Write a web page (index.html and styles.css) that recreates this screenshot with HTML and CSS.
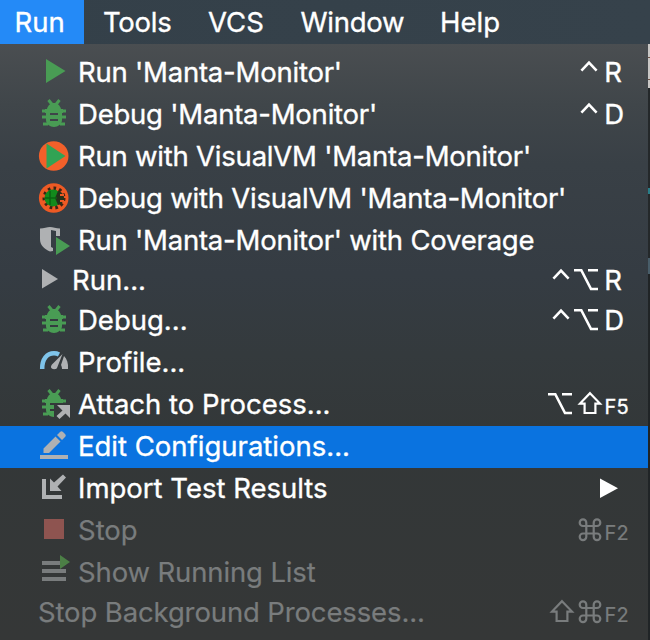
FILE: index.html
```html
<!DOCTYPE html>
<html lang="en">
<head>
<meta charset="utf-8">
<title>Run menu</title>
<link rel="stylesheet" href="styles.css">
</head>
<body>
<svg class="defs" aria-hidden="true">
  <symbol id="ctrl" viewBox="0 0 28 32"><path class="key" d="M5.4 13.6 13 5.6l7.600 8"/></symbol>
  <symbol id="opt" viewBox="0 0 28 32"><path class="key" d="M0 5.200h7.300L17 24H24M14 5.200H24"/></symbol>
  <symbol id="shift" viewBox="0 0 28 32"><path class="key thin" d="M14 4.200 24 14.600H19.400V24H8.600V14.600H4z"/></symbol>
  <symbol id="cmd" viewBox="0 0 28 32"><path class="key thin" d="M10.300 7.700v14.100a3.300 3.300 0 1 1-3.300-3.300h14a3.300 3.300 0 1 1-3.300 3.300v-14.100a3.300 3.300 0 1 1 3.300 3.300H7a3.300 3.300 0 1 1 3.300-3.300z"/></symbol>
  <symbol id="bug" viewBox="0 0 32 32">
    <path class="leg" d="m10.500 1 4 5M21.500 1l-4 5M4 12h5M23 12h5M4 18h5M23 18h5M5 25h5M22 25h5"/>
    <path fill="#499c54" fill-rule="evenodd" d="M9 10c1-4 4-6 7-6s6 2 7 6h2v4h-1v7c0 4-4 7-8 7s-8-3-8-7v-7H7v-4zM12 14v2h8v-2zM12 20v2h8v-2z"/>
  </symbol>
</svg>
<nav class="menubar">
  <span class="tab active">Run</span>
  <span class="tab tools">Tools</span>
  <span class="tab vcs">VCS</span>
  <span class="tab window">Window</span>
  <span class="tab help">Help</span>
</nav>
<div class="stage">
<main class="menu">
  <div class="row">
    <svg class="icon" viewBox="0 0 32 32"><path fill="#499c54" d="M8 2l19.500 12L8 26z"/></svg>
    <span class="label tight">Run 'Manta-Monitor'</span>
    <span class="keys"><svg class="mod"><use href="#ctrl"/></svg><span class="letter">R</span></span>
  </div>
  <div class="row">
    <svg class="icon"><use href="#bug"/></svg>
    <span class="label tight">Debug 'Manta-Monitor'</span>
    <span class="keys"><svg class="mod"><use href="#ctrl"/></svg><span class="letter">D</span></span>
  </div>
  <div class="row">
    <svg class="icon" viewBox="0 0 32 32"><circle cx="15.700" cy="15" r="14.800" fill="#f2602a"/><path fill="#31a354" d="M8.500 2.500l19 12.500-19 12.500z"/></svg>
    <span class="label tight">Run with VisualVM 'Manta-Monitor'</span>
  </div>
  <div class="row">
    <svg class="icon" viewBox="0 0 32 32">
      <circle cx="15.700" cy="15" r="14.800" fill="#ee5a24"/>
      <circle cx="16" cy="15" r="9.500" fill="none" stroke="#3b2415" stroke-width="4" stroke-dasharray="2.500 3"/>
      <circle cx="15" cy="15" r="8.500" fill="#128a1c"/>
      <path fill="#24321a" d="M20 8c4 1 6 4 6 7s-2 6-6 7l-3-7z"/>
      <path stroke="#0b6312" stroke-width="1.500" d="M7 15h12M12 8v14"/>
      <path stroke="#ee5a24" stroke-width="2" d="M22 12h4M22 18h4"/>
    </svg>
    <span class="label tight">Debug with VisualVM 'Manta-Monitor'</span>
  </div>
  <div class="row">
    <svg class="icon" viewBox="0 0 32 32"><path fill="#afb1b3" fill-rule="evenodd" d="M2 3.500c4 0 7-1.500 10-1.500s6 1.500 10 1.500V11h-4V6l-5-1v17l2 1v3l-3 .5C6 24 2 20 2 14z"/><path fill="#499c54" d="M18 12l14 9-14 9z"/></svg>
    <span class="label tight">Run 'Manta-Monitor' with Coverage</span>
  </div>
  <div class="row short">
    <svg class="icon narrow" viewBox="0 0 26 32"><path fill="#afb1b3" d="M4 4l16 10L4 23.500z"/></svg>
    <span class="label">Run...</span>
    <span class="keys"><svg class="mod"><use href="#ctrl"/></svg><svg class="mod tuck"><use href="#opt"/></svg><span class="letter">R</span></span>
  </div>
  <div class="row">
    <svg class="icon"><use href="#bug"/></svg>
    <span class="label">Debug...</span>
    <span class="keys"><svg class="mod"><use href="#ctrl"/></svg><svg class="mod tuck"><use href="#opt"/></svg><span class="letter">D</span></span>
  </div>
  <div class="row">
    <svg class="icon" viewBox="0 0 32 32"><path fill="none" stroke="#7fc4ea" stroke-width="4.500" d="M4.200 22C4 12 9 6.300 16 6.300c2 0 3.500.4 5 1.200"/><path fill="#afb1b3" d="M24.500 7 19 21c-.7 1.800-6.500 1.800-6-1.500.3-1.800 1.500-2.500 2.500-3.600zM26 9c3 3 4.500 7.500 4 13h-6c0-2-.5-3-1-4z"/></svg>
    <span class="label">Profile...</span>
  </div>
  <div class="row">
    <svg class="icon" viewBox="0 0 32 32">
      <path class="leg" d="m10.500 1 4 5M21.500 1l-4 5M4 12h5M23 12h5M4 18h5M5 25h5"/>
      <path fill="#499c54" d="M9 10c1-4 4-6 7-6s6 2 7 6h2v4h-13v2h4v4h-4v2h4v6c-4 0-8-3-8-7v-7H7v-4z"/>
      <path fill="#afb1b3" d="M19 16h13v13l-4.500-4.500-6 5.500-3-3 6-5.500z"/>
    </svg>
    <span class="label">Attach to Process...</span>
    <span class="keys"><svg class="mod"><use href="#opt"/></svg><svg class="mod"><use href="#shift"/></svg><span class="letter fn">F5</span></span>
  </div>
  <div class="row selected">
    <svg class="icon" viewBox="0 0 32 32"><path fill="#afb1b3" d="M2 24h28v4H2zM5.500 22v-4.500L17.500 5.500l5 5L11 22zM19 4l3-3c1-1 2-1 3 0l2 2c1 1 1 2 0 3l-3 3z"/></svg>
    <span class="label">Edit Configurations...</span>
  </div>
  <div class="row">
    <svg class="icon" viewBox="0 0 32 32"><path fill="#afb1b3" d="M4 6h4v16h16v4H4zM12 5.500l4 4L25 1.500l3 3-8.500 9 4 4.500H12z"/></svg>
    <span class="label">Import Test Results</span>
    <span class="keys"><svg class="submenu" viewBox="0 0 20 32"><path fill="#fff" d="M0 5.500 18 15.300 0 25z"/></svg></span>
  </div>
  <div class="row disabled">
    <svg class="icon" viewBox="0 0 32 32"><path fill="#8e5450" d="M6 4h20v20H6z"/></svg>
    <span class="label">Stop</span>
    <span class="keys"><svg class="mod"><use href="#cmd"/></svg><span class="letter fn">F2</span></span>
  </div>
  <div class="row disabled">
    <svg class="icon" viewBox="0 0 32 32"><path fill="#797c7d" d="M4 4h24v4H4zM4 12h24v4H4zM4 20h24v4H4z"/><path fill="#4c7f46" d="M22-2l10 7-10 7z"/></svg>
    <span class="label snug">Show Running List</span>
  </div>
  <div class="row short disabled">
    <span class="label snug">Stop Background Processes...</span>
    <span class="keys"><svg class="mod"><use href="#shift"/></svg><svg class="mod"><use href="#cmd"/></svg><span class="letter fn">F2</span></span>
  </div>
</main>
<div class="edge"></div>
</div>
</body>
</html>
```
FILE: styles.css
```css
* { box-sizing: border-box; }
body {
  margin: 0;
  width: 650px;
  height: 640px;
  overflow: hidden;
  font-family: Inter, "Liberation Sans", sans-serif;
  font-size: 27.5px;
  color: #fff;
  background: #35414a;
  -webkit-text-stroke: 0.35px currentColor;
}
.defs { position: absolute; width: 0; height: 0; }
.menubar { display: flex; height: 44px; line-height: 44px; letter-spacing: -0.25px; background: linear-gradient(90deg, #344049, #36424b); }
.tab { width: 84px; padding-left: 14.5px; white-space: nowrap; }
.tab.active { background: #248af7; letter-spacing: 0; }
.tab.tools { width: 104px; padding-left: 19px; }
.tab.vcs { width: 94px; padding-left: 20px; letter-spacing: 0; }
.tab.window { width: 138px; padding-left: 18.5px; }
.tab.help { padding-left: 20px; letter-spacing: 0; }
.stage { display: flex; height: 596px; }
.menu {
  width: 648px;
  padding-top: 8px;
  background: linear-gradient(180deg, #4a4e51 0, #40464a 60px, #394046 120px, #353c43 230px, #343a3d 310px, #333738 400px, #353737 596px);
}
.edge {
  width: 2px;
  background: linear-gradient(180deg, #c9c7c5 0 13px, #705347 13px 14px, #c9c7c5 14px 35px, #705347 35px 36px, #c9c7c5 36px 44px, #24282a 44px 144px, #287d88 144px 150px, #24282a 150px 214px, #485d69 214px 230px, #202426 230px);
}
.row { display: flex; align-items: center; height: 42px; padding-left: 38px; }
.row.short { height: 38px; }
.row.selected { background: #0a73e0; }
.icon { flex: none; width: 32px; height: 32px; margin-right: 8px; overflow: visible; }
.icon.narrow { width: 26px; }
.label { white-space: nowrap; line-height: 36px; padding-bottom: 2px; }
.label.tight { letter-spacing: -0.22px; }
.label.snug { letter-spacing: -0.13px; }
.disabled { color: #797c7d; -webkit-text-stroke-width: 0.2px; }
.keys { display: flex; align-items: center; margin-left: auto; }
.mod { width: 28px; height: 32px; overflow: visible; }
.mod.tuck { margin-left: -2px; margin-right: 2px; }
.key { fill: none; stroke: currentColor; stroke-width: 2.6; }
.key.thin { stroke-width: 2.2; }
.leg { fill: none; stroke: #499c54; stroke-width: 3; }
.letter { width: 44px; line-height: 36px; padding: 0 0 2px 0.3px; }
.letter.fn { font-size: 20px; padding: 4px 0 0 0.5px; line-height: 34px; letter-spacing: 0.3px; }
.submenu { width: 20px; height: 32px; margin-right: 28px; }
```
